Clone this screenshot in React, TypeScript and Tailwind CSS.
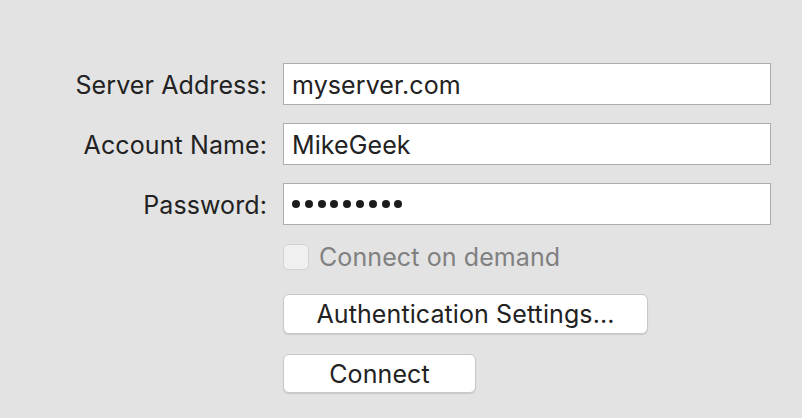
export default function App() {
  const rows = [
    { label: "Server Address:", value: "myserver.com", secret: false },
    { label: "Account Name:", value: "MikeGeek", secret: false },
    { label: "Password:", value: "", secret: true },
  ];

  return (
    <div className="h-[418px] w-[802px] overflow-hidden bg-[#e3e3e3] pt-[63px] font-['Inter',sans-serif] text-[#222]">
      <div className="grid grid-cols-[267px_488px] gap-x-4 gap-y-[18px]">
        {rows.map((row) => (
          <div key={row.label} className="contents">
            <div className="flex h-[42px] items-center justify-end pt-[3px] text-[25px] tracking-[0.1px]">{row.label}</div>
            <div className="flex h-[42px] items-center border border-[#adadad] bg-white pt-[3px] pl-2 text-[25px] tracking-[0.1px]">
              {row.secret ? (
                <div className="flex gap-[4.8px] pb-[3px]">
                  {Array.from({ length: 9 }).map((_, i) => (
                    <span key={i} className="h-[8px] w-[8px] rounded-full bg-[#1c1c1c]" />
                  ))}
                </div>
              ) : (
                row.value
              )}
            </div>
          </div>
        ))}

        <div />
        <div className="mt-[1px] flex h-[26px] items-center gap-[10px]">
          <div className="h-[26px] w-[26px] rounded-[5px] border border-[#d2d2d2] bg-[#f0f0f0]" />
          <span className="pt-[2px] text-[25px] tracking-[0.1px] text-[#808080]">Connect on demand</span>
        </div>

        <div />
        <div className="mt-[6px]">
          <button className="flex h-[40px] w-[365px] items-center justify-center rounded-[6px] border border-[#c8c8c8] bg-white pt-[2px] text-[25px] tracking-[0.1px] shadow-[0_1px_1px_rgba(0,0,0,0.12)]">
            Authentication Settings...
          </button>
        </div>

        <div />
        <div className="mt-[2px]">
          <button className="flex h-[39px] w-[193px] items-center justify-center rounded-[6px] border border-[#c8c8c8] bg-white pt-[2px] text-[25px] tracking-[0.1px] shadow-[0_1px_1px_rgba(0,0,0,0.12)]">
            Connect
          </button>
        </div>
      </div>
    </div>
  );
}
